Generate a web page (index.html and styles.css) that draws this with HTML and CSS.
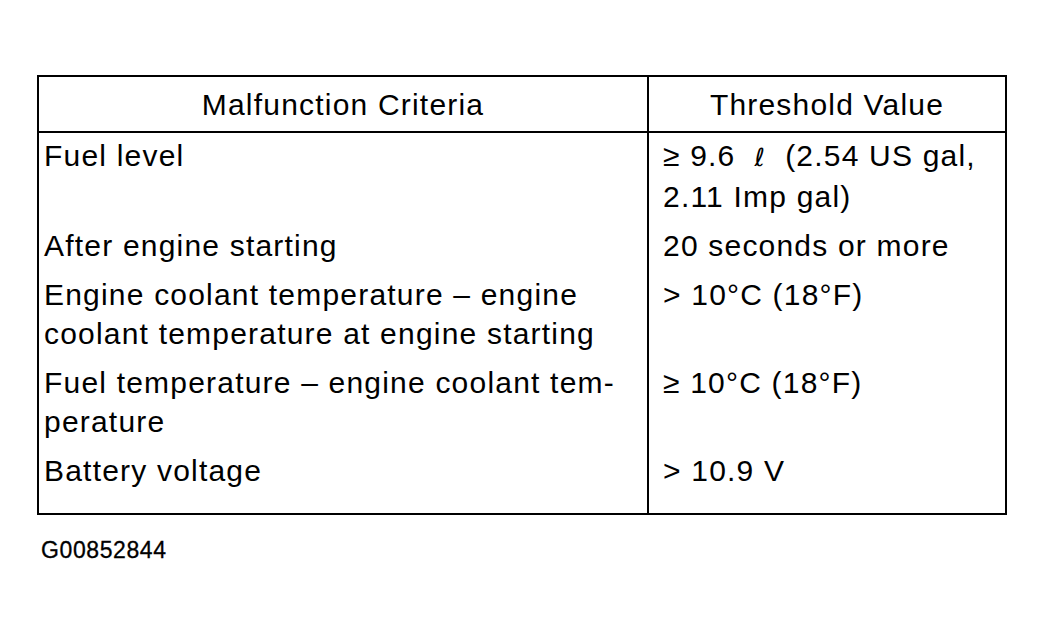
FILE: index.html
```html
<!DOCTYPE html>
<html lang="en">
<head>
    <meta charset="UTF-8">
    <title>Malfunction Criteria</title>
    <link rel="stylesheet" href="styles.css">
</head>
<body>

    <table class="criteria-table">
        <tr class="head-row">
            <th class="col-criteria">Malfunction Criteria</th>
            <th class="col-value">Threshold Value</th>
        </tr>
        <tr>
            <td>Fuel level</td>
            <td class="value">&ge; 9.6 &nbsp;<span class="litre">&#8467;</span>&nbsp; (2.54 US gal,<br>2.11 Imp gal)</td>
        </tr>
        <tr>
            <td>After engine starting</td>
            <td class="value">20 seconds or more</td>
        </tr>
        <tr>
            <td>Engine coolant temperature &ndash; engine<br>coolant temperature at engine starting</td>
            <td class="value">&gt; 10&deg;C (18&deg;F)</td>
        </tr>
        <tr>
            <td>Fuel temperature &ndash; engine coolant tem-<br>perature</td>
            <td class="value">&ge; 10&deg;C (18&deg;F)</td>
        </tr>
        <tr class="last-row">
            <td>Battery voltage</td>
            <td class="value">&gt; 10.9 V</td>
        </tr>
    </table>

    <p class="figure-code">G00852844</p>

</body>
</html>
```

FILE: styles.css
```css
/* Basic Styles */
body {
    font-family: 'Liberation Sans', Arial, sans-serif;
    background-color: #ffffff;
    color: #000000;
    margin: 0;
    padding: 75px 0 0 37px;
}

.criteria-table {
    border-collapse: collapse;
    width: 970px;
    font-size: 30px;
    letter-spacing: 1.2px;
    line-height: 39px;
}

.criteria-table th,
.criteria-table td {
    border: 2px solid #000;
    vertical-align: top;
}

.criteria-table th {
    font-weight: normal;
    text-align: center;
    height: 54px;
    padding: 0;
    vertical-align: middle;
}

.col-criteria {
    width: 608px;
}

.criteria-table td {
    border-top: none;
    border-bottom: none;
    padding: 3px 4px 7px 5px;
    text-align: left;
}

.criteria-table td.value {
    padding-left: 14px;
}

.last-row td {
    padding-bottom: 23px;
    border-bottom: 2px solid #000;
}

.litre {
    font-family: 'DejaVu Sans', sans-serif;
    font-size: 25px;
}

/* Figure code under the table */
.figure-code {
    font-size: 23px;
    letter-spacing: 0.6px;
    margin: 22px 0 0 4px;
    -webkit-text-stroke: 0.3px #000;
}
```
